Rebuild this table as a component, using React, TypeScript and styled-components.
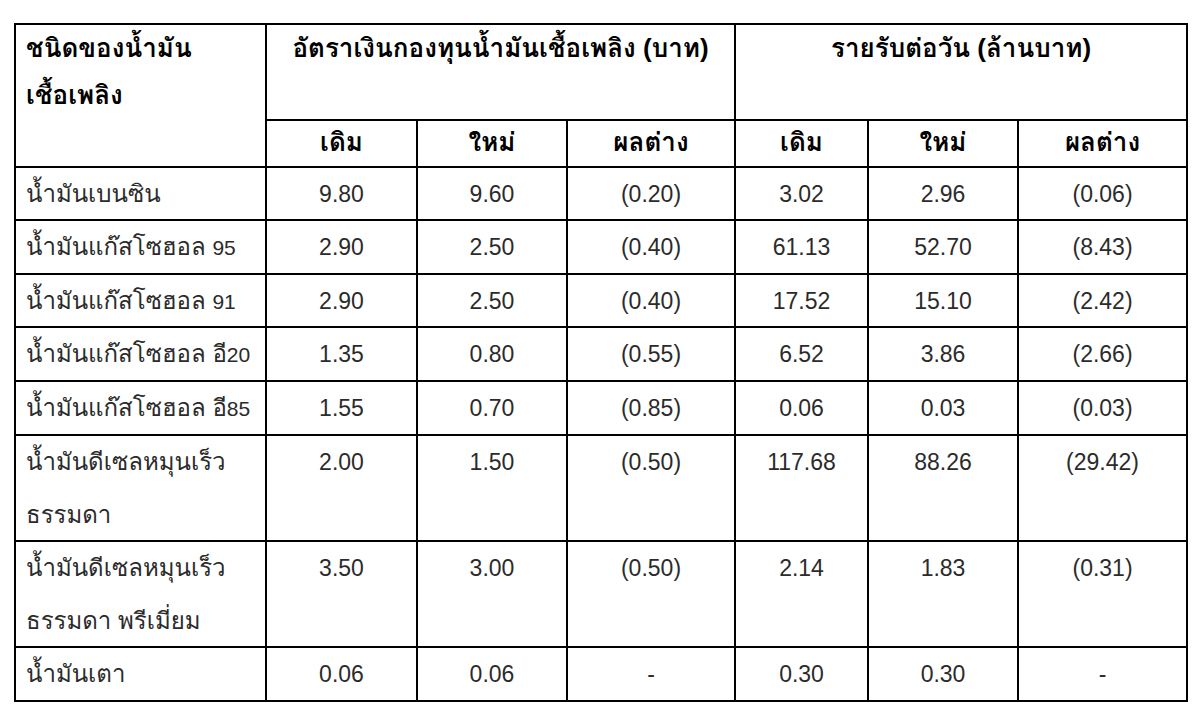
import React from 'react';
import styled, { createGlobalStyle } from 'styled-components';

const GlobalStyle = createGlobalStyle`
  html, body {
    margin: 0;
    padding: 0;
    background: #ffffff;
  }
  body {
    font-family: 'Liberation Sans', Loma, 'Noto Sans Thai', sans-serif;
  }
`;

const Page = styled.div`
  padding: 23px 0 0 14px;
`;

const Table = styled.table`
  border-collapse: collapse;
  table-layout: fixed;
  width: 1172px;
  border: 2px solid #000;
`;

const BodyRow = styled.tr<{ $h: number }>`
  height: ${(p) => p.$h}px;
`;

const Cell = styled.td`
  border: 2px solid #000;
  padding: 1px 0 0;
  text-align: center;
  vertical-align: top;
  font-size: 23px;
  line-height: 50px;
  color: #2b2b2b;
  white-space: nowrap;
`;

const NameCell = styled(Cell)`
  text-align: left;
  padding-left: 10px;
  font-size: 24px;
  line-height: 50px;
`;

const NameLine = styled.div`
  height: 50px;

  & + & {
    margin-top: 3px;
  }
`;

const Num = styled.span`
  font-size: 21px;
  line-height: 1;
`;

const HeadRow = styled.tr<{ $h: number }>`
  height: ${(p) => p.$h}px;
`;

const HeadCell = styled.th<{ $lh?: number }>`
  border: 2px solid #000;
  padding: 0 10px;
  text-align: center;
  vertical-align: top;
  font-size: 26px;
  font-weight: bold;
  line-height: ${(p) => p.$lh || 47}px;
  color: #000;
  white-space: nowrap;
`;

const FirstHead = styled(HeadCell)`
  text-align: left;
`;

type Row = { name: [string, string?][]; values: string[] };

const rows: Row[] = [
  { name: [['น้ำมันเบนซิน']], values: ['9.80', '9.60', '(0.20)', '3.02', '2.96', '(0.06)'] },
  { name: [['น้ำมันแก๊สโซฮอล ', '95']], values: ['2.90', '2.50', '(0.40)', '61.13', '52.70', '(8.43)'] },
  { name: [['น้ำมันแก๊สโซฮอล ', '91']], values: ['2.90', '2.50', '(0.40)', '17.52', '15.10', '(2.42)'] },
  { name: [['น้ำมันแก๊สโซฮอล อี', '20']], values: ['1.35', '0.80', '(0.55)', '6.52', '3.86', '(2.66)'] },
  { name: [['น้ำมันแก๊สโซฮอล อี', '85']], values: ['1.55', '0.70', '(0.85)', '0.06', '0.03', '(0.03)'] },
  { name: [['น้ำมันดีเซลหมุนเร็ว'], ['ธรรมดา']], values: ['2.00', '1.50', '(0.50)', '117.68', '88.26', '(29.42)'] },
  { name: [['น้ำมันดีเซลหมุนเร็ว'], ['ธรรมดา พรีเมี่ยม']], values: ['3.50', '3.00', '(0.50)', '2.14', '1.83', '(0.31)'] },
  { name: [['น้ำมันเตา']], values: ['0.06', '0.06', '-', '0.30', '0.30', '-'] },
];

const rowHeights = [53, 54, 53, 54, 54, 106, 106, 54];
const colWidths = [251, 151, 150, 168, 133, 150, 169];
const sub = ['เดิม', 'ใหม่', 'ผลต่าง', 'เดิม', 'ใหม่', 'ผลต่าง'];

const App: React.FC = () => {
  return (
    <Page>
      <GlobalStyle />
      <Table>
        <colgroup>
          {colWidths.map((w, i) => (
            <col key={i} style={{ width: w }} />
          ))}
        </colgroup>
        <thead>
          <HeadRow $h={96}>
            <FirstHead rowSpan={2}>
              ชนิดของน้ำมัน
              <br />
              เชื้อเพลิง
            </FirstHead>
            <HeadCell colSpan={3}>อัตราเงินกองทุนน้ำมันเชื้อเพลิง (บาท)</HeadCell>
            <HeadCell colSpan={3}>รายรับต่อวัน (ล้านบาท)</HeadCell>
          </HeadRow>
          <HeadRow $h={47}>
            {sub.map((s, i) => (
              <HeadCell key={i} $lh={43}>
                {s}
              </HeadCell>
            ))}
          </HeadRow>
        </thead>
        <tbody>
          {rows.map((r, i) => (
            <BodyRow key={i} $h={rowHeights[i]}>
              <NameCell>
                {r.name.map(([text, num], j) => (
                  <NameLine key={j}>
                    {text}
                    {num && <Num>{num}</Num>}
                  </NameLine>
                ))}
              </NameCell>
              {r.values.map((v, j) => (
                <Cell key={j}>{v}</Cell>
              ))}
            </BodyRow>
          ))}
        </tbody>
      </Table>
    </Page>
  );
};

export default App;
